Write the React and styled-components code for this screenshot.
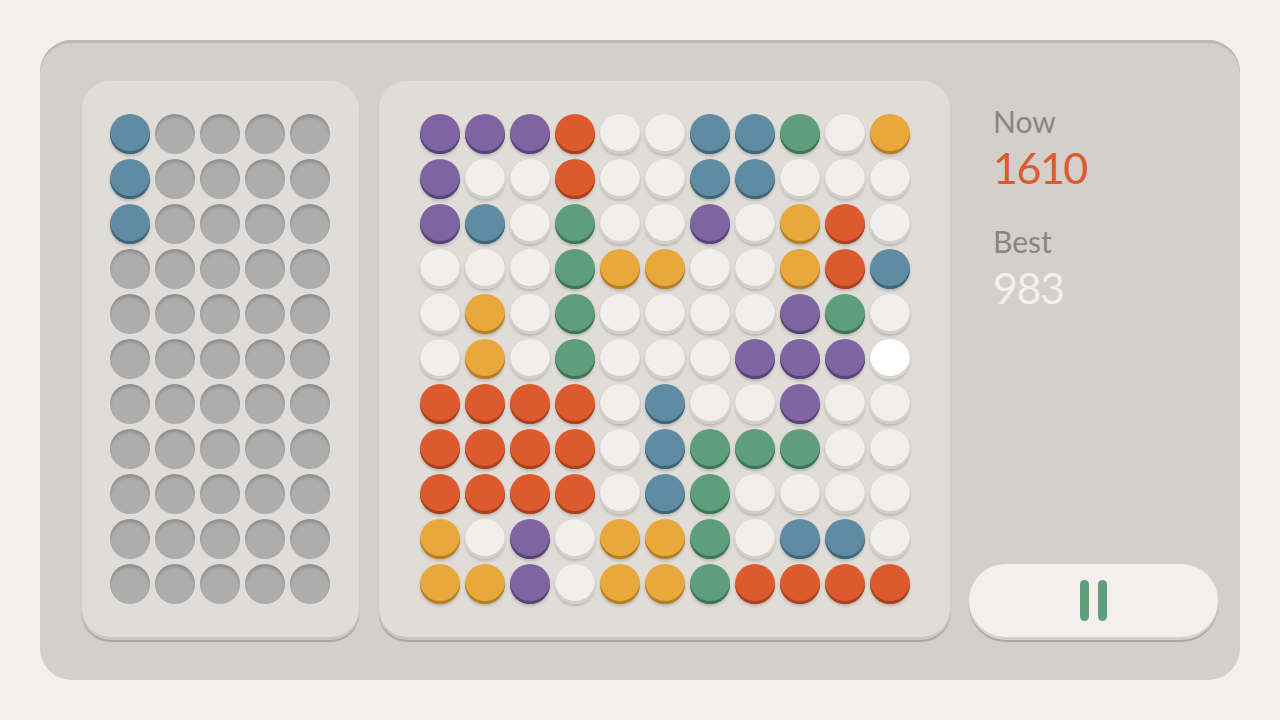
import styled, { createGlobalStyle } from "styled-components"

const GlobalStyle = createGlobalStyle`
    html, body {
        margin: 0;
        padding: 0;
        background-color: #f2efec;
        font-family: 'Lato', 'Noto Sans', sans-serif;
    }
`

const COLORS = {
    P: { face: '#7e64a1', rim: '#58427a' },
    O: { face: '#dc5a2e', rim: '#a6421f' },
    B: { face: '#5f8ca3', rim: '#3e6578' },
    G: { face: '#5f9e7b', rim: '#3e7457' },
    Y: { face: '#e8a83c', rim: '#b47d26' },
    W: { face: '#f1eeeb', rim: '#d2cec9' },
    X: { face: '#ffffff', rim: '#d8d4cf' },
}

const board = [
    'PPPOWWBBGWY',
    'PWWOWWBBWWW',
    'PBWGWWPWYOW',
    'WWWGYYWWYOB',
    'WYWGWWWWPGW',
    'WYWGWWWPPPX',
    'OOOOWBWWPWW',
    'OOOOWBGGGWW',
    'OOOOWBGWWWW',
    'YWPWYYGWBBW',
    'YYPWYYGOOOO',
]

const queue = Array.from({ length: 11 }, (_, r) =>
    r < 3 ? 'B----' : '-----'
)

export default function App(){
    return(
        <>
            <GlobalStyle />
            <Page>
                <Frame>
                    <SidePanel>
                        <Grid cols={5}>
                            {queue.join('').split('').map((c, i) =>
                                c === '-' ? <Hole key={i} /> : <Chip key={i} color={c} />
                            )}
                        </Grid>
                    </SidePanel>
                    <BoardPanel>
                        <Grid cols={11}>
                            {board.join('').split('').map((c, i) => <Chip key={i} color={c} />)}
                        </Grid>
                    </BoardPanel>
                    <Sidebar>
                        <Scores>
                            <Label>Now</Label>
                            <Score current>1610</Score>
                            <Label>Best</Label>
                            <Score>983</Score>
                        </Scores>
                        <PauseButton>
                            <Bar />
                            <Bar />
                        </PauseButton>
                    </Sidebar>
                </Frame>
            </Page>
        </>
    )
}

const Page = styled.div`
    width: 1280px;
    height: 720px;
    padding: 40px;
    box-sizing: border-box;
`

const Frame = styled.div`
    width: 1200px;
    height: 640px;
    box-sizing: border-box;
    background-color: #d3cfcb;
    border-radius: 32px;
    box-shadow: inset 0 3px 0 #bcb9b6;
    display: flex;
    gap: 20px;
    padding: 41px 22px 43px 42px;
`

const Panel = styled.div`
    height: 556px;
    box-sizing: border-box;
    background-color: #e0dcd7;
    border-radius: 28px;
    box-shadow: 0 3px 0 #c9c5c1, 0 5px 1px #a9a6a3;
    display: flex;
    justify-content: center;
    padding-top: 33px;
`

const SidePanel = styled(Panel)`
    width: 277px;
    padding-right: 1px;
`

const BoardPanel = styled(Panel)`
    width: 571px;
`

const Grid = styled.div`
    display: grid;
    grid-template-columns: repeat(${p => p.cols}, 40px);
    grid-auto-rows: 40px;
    gap: 5px;
    align-content: start;
`

const Chip = styled.div`
    width: 40px;
    height: 40px;
    border-radius: 50%;
    background-color: ${p => COLORS[p.color].face};
    box-shadow: inset 0 -3px 0 ${p => COLORS[p.color].rim}, 0 2px 3px rgba(0, 0, 0, 0.18);
`

const Hole = styled.div`
    width: 40px;
    height: 40px;
    border-radius: 50%;
    background-color: #adadad;
    box-shadow: inset 0 3px 3px rgba(0, 0, 0, 0.18);
`

const Sidebar = styled.div`
    width: 248px;
    display: flex;
    flex-direction: column;
    justify-content: space-between;
`

const Scores = styled.div`
    display: flex;
    flex-direction: column;
    padding-left: 23px;
    padding-top: 22px;
`

const Label = styled.div`
    font-size: 30px;
    line-height: 36px;
    color: #8a8581;
`

const Score = styled.div`
    font-size: 43px;
    line-height: 50px;
    letter-spacing: -1.5px;
    margin-top: 4px;
    margin-bottom: 30px;
    color: ${p => p.current ? '#dc5a2e' : '#f2efec'};
`

const PauseButton = styled.div`
    height: 73px;
    background-color: #f2efec;
    border-radius: 37px;
    box-shadow: 0 3px 0 #d6d2ce, 0 5px 1px #a9a6a3;
    display: flex;
    justify-content: center;
    align-items: center;
    gap: 9px;
    margin-left: -1px;
`

const Bar = styled.div`
    width: 9px;
    height: 41px;
    border-radius: 5px;
    background-color: #5f9e7b;
`
